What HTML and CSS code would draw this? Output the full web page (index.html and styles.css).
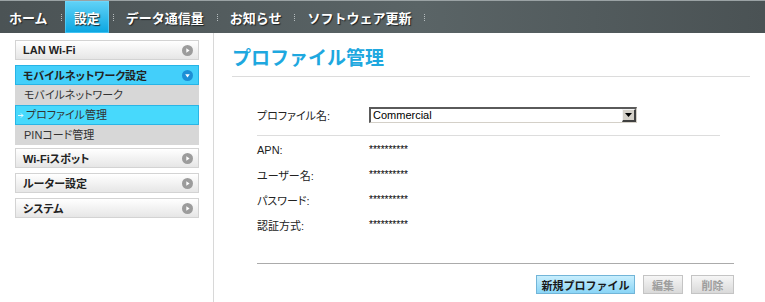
FILE: index.html
```html
<!DOCTYPE html>
<html lang="ja">
<head>
<meta charset="utf-8">
<title>プロファイル管理</title>
<link rel="stylesheet" href="styles.css">
</head>
<body>
<nav class="topnav">
  <a class="nav-item">ホーム</a><span class="sep"></span>
  <a class="nav-item active">設定</a><span class="sep"></span>
  <a class="nav-item">データ通信量</a><span class="sep"></span>
  <a class="nav-item">お知らせ</a><span class="sep"></span>
  <a class="nav-item">ソフトウェア更新</a><span class="sep"></span>
</nav>
<div class="layout">
  <aside class="sidebar">
    <div class="menu-item">
      <span>LAN Wi-Fi</span>
      <svg class="m-icon" width="11" height="11" viewBox="0 0 11 11"><circle cx="5.5" cy="5.5" r="5.5" fill="#9c9c9c"/><polygon points="4.3,3.2 7.6,5.5 4.3,7.8" fill="#fff"/></svg>
    </div>
    <div class="menu-item open">
      <span>モバイルネットワーク設定</span>
      <svg class="m-icon" width="11" height="11" viewBox="0 0 11 11"><circle cx="5.5" cy="5.5" r="5.5" fill="#1d8fd6"/><polygon points="3.2,4.3 7.8,4.3 5.5,7.6" fill="#fff"/></svg>
    </div>
    <div class="submenu">
      <div class="sub-item">モバイルネットワーク</div>
      <div class="sub-item current"><svg class="sub-arrow" width="6" height="5" viewBox="0 0 6 5"><path d="M0 2.5H5M3 0.5L5 2.5L3 4.5" stroke="#e8f8ff" stroke-width="1" fill="none"/></svg>プロファイル管理</div>
      <div class="sub-item">PINコード管理</div>
    </div>
    <div class="menu-item">
      <span>Wi-Fiスポット</span>
      <svg class="m-icon" width="11" height="11" viewBox="0 0 11 11"><circle cx="5.5" cy="5.5" r="5.5" fill="#9c9c9c"/><polygon points="4.3,3.2 7.6,5.5 4.3,7.8" fill="#fff"/></svg>
    </div>
    <div class="menu-item">
      <span>ルーター設定</span>
      <svg class="m-icon" width="11" height="11" viewBox="0 0 11 11"><circle cx="5.5" cy="5.5" r="5.5" fill="#9c9c9c"/><polygon points="4.3,3.2 7.6,5.5 4.3,7.8" fill="#fff"/></svg>
    </div>
    <div class="menu-item">
      <span>システム</span>
      <svg class="m-icon" width="11" height="11" viewBox="0 0 11 11"><circle cx="5.5" cy="5.5" r="5.5" fill="#9c9c9c"/><polygon points="4.3,3.2 7.6,5.5 4.3,7.8" fill="#fff"/></svg>
    </div>
  </aside>
  <main class="content">
    <h1 class="page-title">プロファイル管理</h1>
    <div class="form">
      <div class="profile-row">
        <span class="label">プロファイル名:</span>
        <div class="fake-select">
          <span class="select-text">Commercial</span>
          <span class="select-btn"><svg width="7" height="4" viewBox="0 0 7 4"><polygon points="0,0 7,0 3.5,4" fill="#000"/></svg></span>
        </div>
      </div>
      <div class="info">
        <div class="info-row"><span class="label">APN:</span><span class="value">**********</span></div>
        <div class="info-row"><span class="label">ユーザー名:</span><span class="value">**********</span></div>
        <div class="info-row"><span class="label">パスワード:</span><span class="value">**********</span></div>
        <div class="info-row"><span class="label">認証方式:</span><span class="value">**********</span></div>
      </div>
    </div>
    <div class="actions">
      <button class="btn primary">新規プロファイル</button>
      <button class="btn disabled btn-edit">編集</button>
      <button class="btn disabled btn-del">削除</button>
    </div>
  </main>
</div>
</body>
</html>
```
FILE: styles.css
```css
html, body {
  margin: 0;
  padding: 0;
}
body {
  width: 765px;
  height: 302px;
  overflow: hidden;
  background: #fff;
  color: #222;
  font-family: "Liberation Sans", "Noto Sans CJK JP", sans-serif;
  font-size: 11px;
}

/* top navigation */
.topnav {
  display: flex;
  align-items: stretch;
  height: 32px;
  border-top: 1px solid #9aa2a4;
  background: linear-gradient(to right, #4b5355 0%, #5a6466 55%, #4a5254 100%);
}
.nav-item {
  display: flex;
  align-items: center;
  padding: 0 9px;
  color: #fff;
  font-weight: bold;
  font-size: 13px;
  text-shadow: 1px 1px 1px #1d2224;
}
.nav-item.active {
  background: linear-gradient(#62d2f7, #0aa6e1);
  box-shadow: inset 0 0 0 1px rgba(120, 220, 255, 0.5);
}
.sep {
  align-self: center;
  width: 0;
  height: 7px;
  border-left: 1px dotted #b6bdbf;
  margin: 0 3px 0 4px;
}

/* layout */
.layout {
  display: flex;
  height: 269px;
}
.sidebar {
  width: 214px;
  box-sizing: border-box;
  border-right: 1px solid #d8d8d8;
  padding: 7px 14px 0 15px;
  font-feature-settings: "palt";
}
.menu-item {
  display: flex;
  align-items: center;
  justify-content: space-between;
  height: 20px;
  box-sizing: border-box;
  border: 1px solid #d3d3d3;
  background: linear-gradient(#ffffff, #e6e6e6);
  padding: 0 5px 0 7px;
  font-weight: bold;
  color: #222;
  margin-bottom: 5px;
}
.menu-item.open {
  background: #43cffa;
  border-color: #27b4e6;
  margin-bottom: 0;
}
.m-icon {
  display: block;
}
.submenu {
  margin-bottom: 3px;
}
.sub-item {
  height: 20px;
  line-height: 20px;
  padding-left: 9px;
  background: #d7d7d7;
  color: #333;
}
.sub-item.current {
  box-sizing: border-box;
  line-height: 18px;
  background: #47d9fc;
  border: 1px solid #2ab5e5;
  padding-left: 1px;
  display: flex;
  align-items: center;
}
.sub-arrow {
  display: block;
  margin: 0 2px 0 1px;
}

/* main */
.content {
  flex: 1;
  padding: 0 15px 0 18px;
}
.page-title {
  margin: 0;
  padding: 14px 0 5px;
  font-size: 19px;
  line-height: 24px;
  font-weight: bold;
  color: #1ea8df;
  border-bottom: 1px solid #dcdcdc;
}
.form {
  padding: 0 30px 0 25px;
  font-feature-settings: "palt";
}
.label {
  width: 112px;
  flex: none;
  color: #222;
}
.profile-row {
  display: flex;
  align-items: center;
  margin-top: 30px;
  padding-bottom: 12px;
  border-bottom: 1px solid #dddddd;
}
.fake-select {
  display: flex;
  align-items: stretch;
  width: 268px;
  height: 16px;
  box-sizing: border-box;
  border-style: solid;
  border-width: 2px 1px 1px 2px;
  border-color: #5a5a5a #d4d0c8 #d4d0c8 #5a5a5a;
  background: #fff;
}
.select-text {
  flex: 1;
  padding-left: 2px;
  line-height: 13px;
  color: #000;
}
.select-btn {
  width: 14px;
  box-sizing: border-box;
  background: #d4d0c8;
  border-style: solid;
  border-width: 1px 2px 2px 1px;
  border-color: #f4f4f4 #404040 #404040 #f4f4f4;
  display: flex;
  align-items: center;
  justify-content: center;
}
.select-btn svg {
  display: block;
}
.info {
  padding-top: 1px;
}
.info-row {
  display: flex;
  align-items: center;
  height: 25px;
}
.value {
  color: #000;
  font-size: 10px;
}

/* actions */
.actions {
  display: flex;
  justify-content: flex-end;
  gap: 8px;
  margin: 26px 16px 0 25px;
  padding-top: 11px;
  border-top: 1px solid #ababab;
}
.btn {
  height: 19px;
  box-sizing: border-box;
  padding: 0;
  font-family: inherit;
  font-size: 11px;
  font-weight: bold;
  border: 1px solid #c4c4c4;
  display: flex;
  align-items: center;
  justify-content: center;
}
.btn.primary {
  width: 99px;
  color: #1a1a1a;
  border-color: #72b5d8;
  background: linear-gradient(#c8eefd, #8ad5f6);
}
.btn.disabled {
  color: #9e9e9e;
  background: linear-gradient(#f6f6f6, #d9d9d9);
}
.btn-edit {
  width: 40px;
}
.btn-del {
  width: 43px;
}
```
